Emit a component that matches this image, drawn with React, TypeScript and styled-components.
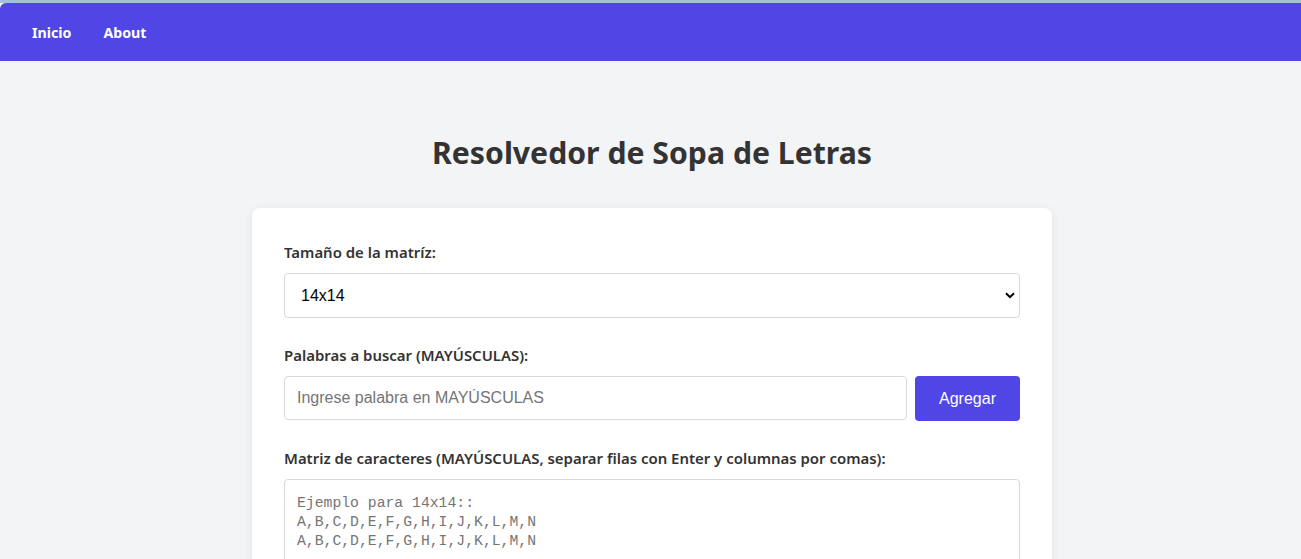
import React from "react";
import styled, { createGlobalStyle } from "styled-components";

const GlobalStyle = createGlobalStyle`
  * { box-sizing: border-box; }
  html, body { margin: 0; padding: 0; }
  body {
    background: #f3f4f6;
    font-family: "Noto Sans", "Open Sans", sans-serif;
    color: #333333;
    overflow: hidden;
  }
`;

const Page = styled.div`
  display: flex;
  flex-direction: column;
  min-height: 100vh;
  background: #f3f4f6;
  border-top: 3px solid #a3c3d6;
`;

const NavBar = styled.nav`
  height: 58px;
  background: #4f46e5;
  display: flex;
  align-items: center;
  gap: 32px;
  padding: 0 32px;
  border-top-left-radius: 6px;
`;

const NavLink = styled.a`
  color: #ffffff;
  font-weight: 700;
  font-size: 14.2px;
  text-decoration: none;
  cursor: pointer;
`;

const Main = styled.main`
  display: flex;
  flex-direction: column;
  align-items: center;
  padding: 73px 0 0 3px;
`;

const Title = styled.h1`
  margin: 0 0 36px;
  font-size: 30.2px;
  line-height: 38px;
  font-weight: 700;
  color: #333333;
`;

const Card = styled.section`
  width: 800px;
  background: #ffffff;
  border-radius: 8px;
  box-shadow: 0 2px 10px rgba(0, 0, 0, 0.08);
  padding: 32px;
`;

const Field = styled.div`
  margin-bottom: 25px;
`;

const Label = styled.label`
  display: block;
  font-size: 14.95px;
  font-weight: 600;
  line-height: 25px;
  margin-bottom: 8px;
  color: #333333;
`;

const SelectWrap = styled.div`
  position: relative;
`;

const Select = styled.select`
  width: 100%;
  height: 45px;
  appearance: none;
  background: #ffffff;
  border: 1px solid #d9d9d9;
  border-radius: 4px;
  padding: 0 12px 0 16px;
  font-family: "Liberation Sans", Arial, sans-serif;
  font-size: 16px;
  color: #000000;
`;

const Chevron = styled.svg`
  position: absolute;
  right: 5px;
  top: 19px;
  pointer-events: none;
`;

const Row = styled.div`
  display: flex;
  align-items: flex-start;
  gap: 8px;
`;

const TextInput = styled.input`
  flex: 1;
  height: 44px;
  border: 1px solid #d9d9d9;
  border-radius: 4px;
  padding: 0 12px;
  font-family: "Liberation Sans", Arial, sans-serif;
  font-size: 16px;
  color: #333;
  &::placeholder { color: #757575; }
`;

const Button = styled.button`
  width: 105px;
  height: 45px;
  border: none;
  border-radius: 4px;
  background: #4f46e5;
  color: #ffffff;
  font-family: "Liberation Sans", Arial, sans-serif;
  font-size: 16px;
  padding-top: 2px;
  cursor: pointer;
`;

const TextArea = styled.textarea`
  display: block;
  width: 100%;
  height: 300px;
  border: 1px solid #d9d9d9;
  border-radius: 4px;
  padding: 14px 12px 12px;
  resize: vertical;
  font-family: "Liberation Mono", "DejaVu Sans Mono", monospace;
  font-size: 14.75px;
  line-height: 19px;
  color: #333;
  &::placeholder { color: #757575; }
`;

export default function App() {
  return (
    <>
      <GlobalStyle />
      <Page>
        <NavBar>
          <NavLink>Inicio</NavLink>
          <NavLink>About</NavLink>
        </NavBar>
        <Main>
          <Title>Resolvedor de Sopa de Letras</Title>
          <Card>
            <Field>
              <Label>Tamaño de la matríz:</Label>
              <SelectWrap>
                <Select defaultValue="14x14">
                  <option value="10x10">10x10</option>
                  <option value="12x12">12x12</option>
                  <option value="14x14">14x14</option>
                  <option value="16x16">16x16</option>
                </Select>
                <Chevron width="10" height="7" viewBox="0 0 10 7">
                  <path d="M1 1.2 L5 5.2 L9 1.2" fill="none" stroke="#000" strokeWidth="2" />
                </Chevron>
              </SelectWrap>
            </Field>
            <Field>
              <Label>Palabras a buscar (MAYÚSCULAS):</Label>
              <Row>
                <TextInput placeholder="Ingrese palabra en MAYÚSCULAS" />
                <Button>Agregar</Button>
              </Row>
            </Field>
            <Field>
              <Label>Matriz de caracteres (MAYÚSCULAS, separar filas con Enter y columnas por comas):</Label>
              <TextArea
                placeholder={"Ejemplo para 14x14::\nA,B,C,D,E,F,G,H,I,J,K,L,M,N\nA,B,C,D,E,F,G,H,I,J,K,L,M,N"}
              />
            </Field>
          </Card>
        </Main>
      </Page>
    </>
  );
}
